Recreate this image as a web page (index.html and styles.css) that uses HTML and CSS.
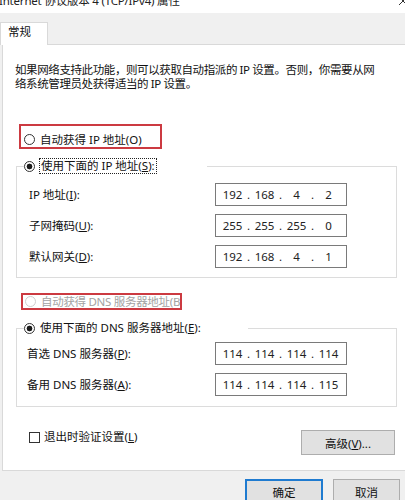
FILE: index.html
```html
<!DOCTYPE html>
<html lang="zh-CN">
<head>
<meta charset="utf-8">
<title>Internet 协议版本 4 (TCP/IPv4) 属性</title>
<link rel="stylesheet" href="styles.css">
</head>
<body>
<div class="titlebar">
  <span class="title">Internet 协议版本 4 (TCP/IPv4) 属性</span>
  <svg class="close" viewBox="0 0 10 10" width="10" height="10"><path d="M1 1L9 9M9 1L1 9" stroke="#333" stroke-width="1" fill="none"/></svg>
</div>
<div class="tabs"><div class="tab">常规</div></div>
<div class="panel">
  <p class="desc">如果网络支持此功能，则可以获取自动指派的 IP 设置。否则，你需要从网<br>络系统管理员处获得适当的 IP 设置。</p>

  <div class="mark mark-ip"><span class="radio"></span><span>自动获得 IP 地址(O)</span></div>

  <fieldset class="group group-ip">
    <legend class="legend legend-ip"><span class="radio checked"></span><span class="focus">使用下面的 IP 地址(<u>S</u>):</span></legend>
    <div class="row"><span class="label">IP 地址(<u>I</u>):</span>
      <div class="ipbox"><span class="oct">192</span><span class="dot">.</span><span class="oct">168</span><span class="dot">.</span><span class="oct">4</span><span class="dot">.</span><span class="oct">2</span></div></div>
    <div class="row"><span class="label">子网掩码(<u>U</u>):</span>
      <div class="ipbox"><span class="oct">255</span><span class="dot">.</span><span class="oct">255</span><span class="dot">.</span><span class="oct">255</span><span class="dot">.</span><span class="oct">0</span></div></div>
    <div class="row"><span class="label">默认网关(<u>D</u>):</span>
      <div class="ipbox"><span class="oct">192</span><span class="dot">.</span><span class="oct">168</span><span class="dot">.</span><span class="oct">4</span><span class="dot">.</span><span class="oct">1</span></div></div>
  </fieldset>

  <div class="mark mark-dns"><span class="radio disabled"></span><span class="disabled-text">自动获得 DNS 服务器地址(B)</span></div>

  <fieldset class="group group-dns">
    <legend class="legend legend-dns"><span class="radio checked"></span><span class="plain">使用下面的 DNS 服务器地址(<u>E</u>):</span></legend>
    <div class="row"><span class="label label-dns">首选 DNS 服务器(<u>P</u>):</span>
      <div class="ipbox"><span class="oct">114</span><span class="dot">.</span><span class="oct">114</span><span class="dot">.</span><span class="oct">114</span><span class="dot">.</span><span class="oct">114</span></div></div>
    <div class="row"><span class="label label-dns">备用 DNS 服务器(<u>A</u>):</span>
      <div class="ipbox"><span class="oct">114</span><span class="dot">.</span><span class="oct">114</span><span class="dot">.</span><span class="oct">114</span><span class="dot">.</span><span class="oct">115</span></div></div>
  </fieldset>

  <div class="options">
    <label class="check"><span class="checkbox"></span><span>退出时验证设置(<u>L</u>)</span></label>
    <button class="btn btn-adv">高级(<u>V</u>)...</button>
  </div>
</div>
<div class="footer">
  <button class="btn btn-ok">确定</button>
  <button class="btn btn-cancel">取消</button>
</div>
</body>
</html>
```
FILE: styles.css
```css
* { box-sizing: border-box; }
html, body { margin: 0; padding: 0; }
body {
  width: 405px;
  height: 500px;
  overflow: hidden;
  background: #f0f0f0;
  font-family: "Noto Sans", "Noto Sans CJK SC", sans-serif;
  font-size: 11.5px;
  line-height: 14px;
  color: #111;
}
u { text-decoration: underline; text-underline-offset: 1px; }

.titlebar {
  height: 13px;
  background: #fff;
  display: flex;
  justify-content: space-between;
  overflow: hidden;
}
.title {
  white-space: nowrap;
  margin-top: -6px;
  margin-left: -1px;
  line-height: 14px;
  color: #222;
  letter-spacing: -0.2px;
}
.close { flex: none; margin-top: -4px; margin-right: -3px; }

.tabs { padding-top: 9px; }
.tab {
  position: relative;
  z-index: 1;
  width: 48px;
  height: 23px;
  margin-bottom: -1px;
  background: #fff;
  border: 1px solid #d9d9d9;
  border-bottom: none;
  padding: 2px 0 0 7px;
}

.panel {
  margin-left: 2px;
  background: #fff;
  border: 1px solid #d9d9d9;
  border-right: none;
  padding: 18px 0 15px 12px;
}
.desc { margin: 0; white-space: nowrap; line-height: 14px; letter-spacing: -0.4px; }

.mark {
  border: 2px solid #cc3a41;
  display: flex;
  align-items: center;
  white-space: nowrap;
  overflow: hidden;
}
.mark-ip {
  margin: 33px 0 0 4px;
  width: 143px;
  height: 25px;
  padding: 6px 0 0 3px;
}
.mark-dns {
  margin: 15px 0 0 6px;
  width: 161px;
  height: 17px;
  padding: 0 0 0 2px;
  line-height: 13px;
}

.radio {
  flex: none;
  width: 11px;
  height: 11px;
  border: 1px solid #333;
  border-radius: 50%;
  background: #fff;
  margin-right: 5px;
}
.radio.checked {
  background: radial-gradient(circle, #1a1a1a 0 2.6px, #fff 3.2px);
  margin-right: 4px;
}
.radio.disabled { border-color: #cfcfcf; }
.disabled-text { color: #a3a3a3; letter-spacing: -0.3px; }

.group {
  margin: 9px 8px 0 1px;
  padding: 9px 0 9px 12px;
  border: 1px solid #dcdcdc;
  min-width: 0;
}
.group-dns { margin-top: 10px; padding-top: 6px; padding-bottom: 10px; }
.legend {
  display: flex;
  align-items: center;
  height: 16px;
  padding: 0;
  margin-left: -5px;
}
.legend-ip { width: 183px; }
.legend-dns { width: 224px; }
.focus {
  border: 1px dotted #222;
  padding: 0 1px;
  line-height: 14px;
  white-space: nowrap;
}
.plain { white-space: nowrap; padding-left: 1px; }

.row { display: flex; align-items: center; height: 23px; }
.row + .row { margin-top: 8px; }
.label { width: 186px; flex: none; white-space: nowrap; }
.label-dns { margin-left: -2px; width: 188px; }
.ipbox {
  width: 132px;
  height: 23px;
  border: 1px solid #7a7a7a;
  display: flex;
  align-items: center;
  padding-left: 4px;
  font-size: 11.5px;
  color: #222;
}
.oct { width: 25px; text-align: center; }
.dot { width: 7px; text-align: center; }

.options {
  display: flex;
  justify-content: space-between;
  align-items: flex-start;
  margin-top: 23px;
  padding-left: 14px;
}
.check { display: flex; align-items: center; height: 14px; white-space: nowrap; }
.checkbox {
  width: 11px;
  height: 11px;
  border: 1px solid #333;
  background: #fff;
  margin-right: 4px;
}
.btn {
  font-family: inherit;
  font-size: 11.5px;
  color: #111;
  background: #e1e1e1;
  border: 1px solid #adadad;
  padding: 0;
  margin: 0;
}
.btn-adv { width: 94px; height: 25px; margin-right: 10px; }

.footer {
  display: flex;
  justify-content: flex-end;
  gap: 10px;
  padding: 8px 5px 0 0;
}
.btn-ok { width: 78px; height: 25px; border: 2px solid #1f7bd0; }
.btn-cancel { width: 67px; height: 25px; }
```
